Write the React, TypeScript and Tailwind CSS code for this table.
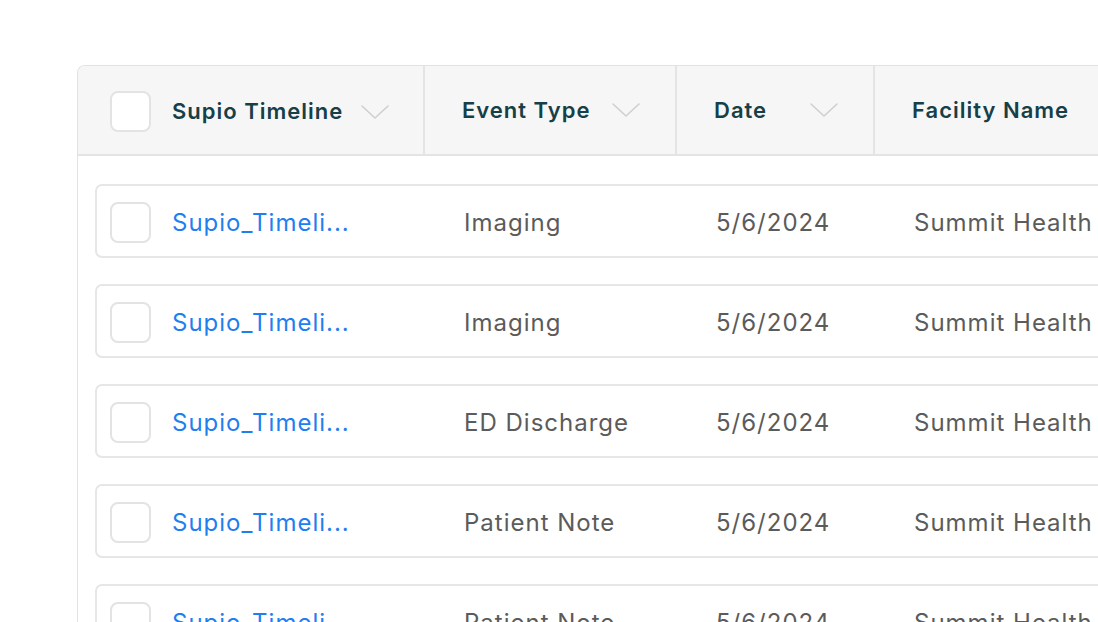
const rows = [
  { name: "Supio_Timeli...", type: "Imaging", date: "5/6/2024", facility: "Summit Health" },
  { name: "Supio_Timeli...", type: "Imaging", date: "5/6/2024", facility: "Summit Health" },
  { name: "Supio_Timeli...", type: "ED Discharge", date: "5/6/2024", facility: "Summit Health" },
  { name: "Supio_Timeli...", type: "Patient Note", date: "5/6/2024", facility: "Summit Health" },
  { name: "Supio_Timeli...", type: "Patient Note", date: "5/6/2024", facility: "Summit Health" },
]

function Chevron() {
  return (
    <svg width="30" height="16" viewBox="0 0 30 16" fill="none" className="shrink-0">
      <polyline points="2,2 15,14 28,2" stroke="#cfcfcf" strokeWidth="1.6" strokeLinecap="round" strokeLinejoin="round" />
    </svg>
  )
}

function Checkbox() {
  return <div className="w-[41px] h-[41px] shrink-0 rounded-[8px] border-2 border-[#e3e3e3] bg-white" />
}

export default function App() {
  return (
    <div className="w-[1098px] h-[622px] overflow-hidden bg-white font-['Inter',sans-serif]">
      <div className="pt-[65px] pl-[77px]">
        <div className="w-[1200px] h-[600px] rounded-tl-[8px] border-l border-t border-[#e2e2e2]">
          {/* Header */}
          <div className="grid grid-cols-[347px_252px_198px_1fr] h-[90px] bg-[#f6f6f6] border-b-2 border-[#e4e4e4] rounded-tl-[8px]">
            <div className="flex items-center pl-[32px] pr-[33px] pt-[2px] border-r-2 border-[#e4e4e4]">
              <Checkbox />
              <span className="ml-[21px] text-[22px] font-semibold text-[#173f48] tracking-[1px]">Supio Timeline</span>
              <span className="ml-auto mt-[2px]"><Chevron /></span>
            </div>
            <div className="flex items-center pl-[37px] pr-[34px] border-r-2 border-[#e4e4e4]">
              <span className="text-[22px] font-semibold text-[#173f48] tracking-[1px]">Event Type</span>
              <span className="ml-auto"><Chevron /></span>
            </div>
            <div className="flex items-center pl-[37px] pr-[34px] border-r-2 border-[#e4e4e4]">
              <span className="text-[22px] font-semibold text-[#173f48] tracking-[1px]">Date</span>
              <span className="ml-auto"><Chevron /></span>
            </div>
            <div className="flex items-center pl-[37px]">
              <span className="text-[22px] font-semibold text-[#173f48] tracking-[1px] whitespace-nowrap">Facility Name</span>
            </div>
          </div>

          {/* Rows */}
          <div className="flex flex-col gap-[26px] pt-[28px] pl-[17px]">
            {rows.map((r, i) => (
              <div
                key={i}
                className="grid grid-cols-[330px_252px_198px_1fr] h-[74px] pt-[2px] items-center rounded-[7px] border-2 border-[#e6e6e6] bg-white text-[24px] tracking-[1px]"
              >
                <div className="flex items-center pl-[13px]">
                  <Checkbox />
                  <span className="ml-[21px] pt-[2px] text-[#1f7ff0]">{r.name}</span>
                </div>
                <span className="pl-[37px] pt-[2px] text-[#5b5b5b]">{r.type}</span>
                <span className="pl-[37px] pt-[2px] text-[#5b5b5b]">{r.date}</span>
                <span className="pl-[37px] pt-[2px] text-[#5b5b5b] whitespace-nowrap">{r.facility}</span>
              </div>
            ))}
          </div>
        </div>
      </div>
    </div>
  )
}
